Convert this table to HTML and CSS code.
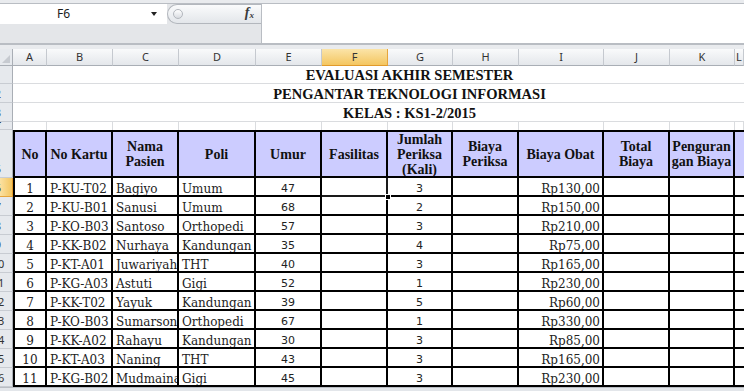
FILE: index.html
```html
<!DOCTYPE html>
<html>
<head>
<meta charset="utf-8">
<title>Evaluasi Akhir Semester</title>
<link rel="stylesheet" href="styles.css">
</head>
<body>
<div class="app">
  <div class="fbar">
    <div class="fbar-in">
      <div class="fleft">
        <div class="ftop">
          <div class="namebox"><span class="name">F6</span><span class="dd"></span></div>
          <div class="fxbox"><span class="knob"></span><span class="fx">f<sub>x</sub></span></div>
        </div>
      </div>
      <div class="finput"></div>
    </div>
  </div>

  <div class="sheet">
    <div class="corner"></div>
    <div class="ch">A</div><div class="ch">B</div><div class="ch">C</div><div class="ch">D</div><div class="ch">E</div><div class="ch sel">F</div><div class="ch">G</div><div class="ch">H</div><div class="ch">I</div><div class="ch">J</div><div class="ch">K</div><div class="ch">L</div>

    <div class="rh"><span>1</span></div><div class="t">EVALUASI AKHIR SEMESTER</div>
    <div class="rh"><span>2</span></div><div class="t">PENGANTAR TEKNOLOGI INFORMASI</div>
    <div class="rh"><span>3</span></div><div class="t">KELAS : KS1-2/2015</div>

    <div class="rh"><span>4</span></div>
    <div class="g"></div><div class="g"></div><div class="g"></div><div class="g"></div><div class="g"></div><div class="g"></div><div class="g"></div><div class="g"></div><div class="g"></div><div class="g"></div><div class="g"></div><div class="g"></div>

    <div class="rh"><span>5</span></div>
    <div class="hd ca">No</div>
    <div class="hd">No Kartu</div>
    <div class="hd">Nama Pasien</div>
    <div class="hd">Poli</div>
    <div class="hd">Umur</div>
    <div class="hd">Fasilitas</div>
    <div class="hd">Jumlah Periksa (Kali)</div>
    <div class="hd">Biaya Periksa</div>
    <div class="hd">Biaya Obat</div>
    <div class="hd">Total Biaya</div>
    <div class="hd">Penguran<wbr>gan Biaya</div>
    <div class="hd cl"></div>

    <div class="rh sel"><span>6</span></div>
    <div class="c ca ctr">1</div><div class="c">P-KU-T02</div><div class="c">Bagiyo</div><div class="c">Umum</div><div class="c num">47</div><div class="c active"><i class="handle"></i></div><div class="c num">3</div><div class="c"></div><div class="c rp">Rp130,00</div><div class="c"></div><div class="c"></div><div class="c cl"></div>

    <div class="rh"><span>7</span></div>
    <div class="c ca ctr">2</div><div class="c">P-KU-B01</div><div class="c">Sanusi</div><div class="c">Umum</div><div class="c num">68</div><div class="c"></div><div class="c num">2</div><div class="c"></div><div class="c rp">Rp150,00</div><div class="c"></div><div class="c"></div><div class="c cl"></div>

    <div class="rh"><span>8</span></div>
    <div class="c ca ctr">3</div><div class="c">P-KO-B03</div><div class="c">Santoso</div><div class="c">Orthopedi</div><div class="c num">57</div><div class="c"></div><div class="c num">3</div><div class="c"></div><div class="c rp">Rp210,00</div><div class="c"></div><div class="c"></div><div class="c cl"></div>

    <div class="rh"><span>9</span></div>
    <div class="c ca ctr">4</div><div class="c">P-KK-B02</div><div class="c">Nurhaya</div><div class="c">Kandungan</div><div class="c num">35</div><div class="c"></div><div class="c num">4</div><div class="c"></div><div class="c rp">Rp75,00</div><div class="c"></div><div class="c"></div><div class="c cl"></div>

    <div class="rh"><span>10</span></div>
    <div class="c ca ctr">5</div><div class="c">P-KT-A01</div><div class="c">Juwariyah</div><div class="c">THT</div><div class="c num">40</div><div class="c"></div><div class="c num">3</div><div class="c"></div><div class="c rp">Rp165,00</div><div class="c"></div><div class="c"></div><div class="c cl"></div>

    <div class="rh"><span>11</span></div>
    <div class="c ca ctr">6</div><div class="c">P-KG-A03</div><div class="c">Astuti</div><div class="c">Gigi</div><div class="c num">52</div><div class="c"></div><div class="c num">1</div><div class="c"></div><div class="c rp">Rp230,00</div><div class="c"></div><div class="c"></div><div class="c cl"></div>

    <div class="rh"><span>12</span></div>
    <div class="c ca ctr">7</div><div class="c">P-KK-T02</div><div class="c">Yayuk</div><div class="c">Kandungan</div><div class="c num">39</div><div class="c"></div><div class="c num">5</div><div class="c"></div><div class="c rp">Rp60,00</div><div class="c"></div><div class="c"></div><div class="c cl"></div>

    <div class="rh"><span>13</span></div>
    <div class="c ca ctr">8</div><div class="c">P-KO-B03</div><div class="c">Sumarsono</div><div class="c">Orthopedi</div><div class="c num">67</div><div class="c"></div><div class="c num">1</div><div class="c"></div><div class="c rp">Rp330,00</div><div class="c"></div><div class="c"></div><div class="c cl"></div>

    <div class="rh"><span>14</span></div>
    <div class="c ca ctr">9</div><div class="c">P-KK-A02</div><div class="c">Rahayu</div><div class="c">Kandungan</div><div class="c num">30</div><div class="c"></div><div class="c num">3</div><div class="c"></div><div class="c rp">Rp85,00</div><div class="c"></div><div class="c"></div><div class="c cl"></div>

    <div class="rh"><span>15</span></div>
    <div class="c ca ctr">10</div><div class="c">P-KT-A03</div><div class="c">Naning</div><div class="c">THT</div><div class="c num">43</div><div class="c"></div><div class="c num">3</div><div class="c"></div><div class="c rp">Rp165,00</div><div class="c"></div><div class="c"></div><div class="c cl"></div>

    <div class="rh"><span>16</span></div>
    <div class="c ca ctr">11</div><div class="c">P-KG-B02</div><div class="c">Mudmainah</div><div class="c">Gigi</div><div class="c num">45</div><div class="c"></div><div class="c num">3</div><div class="c"></div><div class="c rp">Rp230,00</div><div class="c"></div><div class="c"></div><div class="c cl"></div>

    <div class="foot"></div>
  </div>
</div>
</body>
</html>
```

FILE: styles.css
```css
* { box-sizing: border-box; margin: 0; padding: 0; }

body {
  margin: 0;
  width: 744px;
  height: 391px;
  overflow: hidden;
  background: #ffffff;
  font-family: "Liberation Serif", serif;
}

.app {
  width: 744px;
  height: 391px;
  overflow: hidden;
  display: flex;
  flex-direction: column;
}

/* ---------- formula bar ---------- */
.fbar {
  flex: none;
  height: 49px;
  background: #e9ebee;
  padding-top: 3px;
}

.fbar-in {
  height: 42px;
  display: flex;
  border-top: 1px solid #b9bdc3;
  border-bottom: 2px solid #b9bdc3;
}

.fleft {
  flex: none;
  width: 262px;
  background: #e4e6e9;
  border-right: 1px solid #b9bdc3;
}

.ftop {
  height: 20px;
  display: flex;
}

.namebox {
  flex: none;
  width: 167px;
  background: #ffffff;
  display: flex;
  align-items: center;
  padding-left: 57px;
}

.name {
  font-family: "Noto Sans", sans-serif;
  font-size: 12px;
  color: #1b1b1b;
  line-height: 16px;
}

.dd {
  margin-left: auto;
  margin-right: 10px;
  width: 0;
  height: 0;
  border-left: 3px solid transparent;
  border-right: 3px solid transparent;
  border-top: 4px solid #222;
}

.fxbox {
  flex: 1;
  display: flex;
  align-items: center;
  background: linear-gradient(#fafbfc, #e3e6ea);
  border: 1px solid #b3b7bd;
  border-right: none;
  border-radius: 10px 0 0 10px;
  padding-left: 5px;
}

.knob {
  width: 10px;
  height: 10px;
  border-radius: 50%;
  border: 1px solid #b3b7bd;
  background: linear-gradient(#ffffff, #d9dce1);
}

.fx {
  margin-left: auto;
  margin-right: 7px;
  font-family: "Liberation Serif", serif;
  font-style: italic;
  font-weight: bold;
  font-size: 14px;
  line-height: 14px;
  color: #3a3a3a;
}

.fx sub {
  font-size: 9px;
  vertical-align: -1px;
}

.finput {
  flex: 1;
  background: #ffffff;
}

/* ---------- sheet ---------- */
.sheet {
  flex: none;
  display: grid;
  grid-template-columns: 13px 34px 66px 66px 77px 66px 66px 65px 66px 85px 66px 65px 9px;
  grid-template-rows: 17px 18px 19px 19px 8px 48px repeat(11, 19px) 4px;
}

.corner {
  position: relative;
  background: #e6e9ed;
  border-right: 1px solid #a9aeb5;
  border-bottom: 1px solid #a9aeb5;
}

.corner::after {
  content: "";
  position: absolute;
  right: 2px;
  bottom: 2px;
  width: 0;
  height: 0;
  border-left: 8px solid transparent;
  border-bottom: 8px solid #c6cad0;
}

.ch {
  background: linear-gradient(#f9fafb, #e4e7eb);
  border-right: 1px solid #c5c9cf;
  border-bottom: 1px solid #a9aeb5;
  font-family: "Noto Sans", sans-serif;
  font-size: 11px;
  line-height: 16px;
  color: #333;
  text-align: center;
  overflow: hidden;
}

.ch.sel {
  background: linear-gradient(#fbe4a8, #f4c660);
  border-right-color: #e6a53c;
  border-bottom-color: #e19a2b;
}

.rh {
  background: #e6e9ed;
  border-right: 1px solid #a9aeb5;
  border-bottom: 1px solid #c8ccd2;
  display: flex;
  justify-content: flex-end;
  align-items: flex-end;
  overflow: hidden;
  font-family: "Noto Sans", sans-serif;
  font-size: 11px;
  color: #333;
}

.rh span {
  flex: none;
  width: 28px;
  text-align: center;
  line-height: 17px;
}

.rh.sel {
  background: linear-gradient(90deg, #fbe1a2, #f4c660);
  border-right-color: #e19a2b;
  border-bottom-color: #e6a53c;
}

/* title rows */
.t {
  grid-column: 2 / -1;
  background: #ffffff;
  border-bottom: 1px solid #dadcdf;
  display: flex;
  justify-content: center;
  align-items: flex-end;
  padding-left: 62px;
  font-family: "Liberation Serif", serif;
  font-weight: bold;
  font-size: 14.5px;
  line-height: 16px;
  color: #111;
  white-space: nowrap;
}

/* blank gridline row */
.g {
  background: #ffffff;
  border-right: 1px solid #dadcdf;
}

/* table header */
.hd {
  background: #ccccff;
  border-top: 2px solid #000;
  border-right: 2px solid #000;
  border-bottom: 2px solid #000;
  display: flex;
  align-items: center;
  justify-content: center;
  text-align: center;
  padding: 0 1px;
  font-family: "Liberation Serif", serif;
  font-weight: bold;
  font-size: 14px;
  line-height: 15px;
  color: #111;
  overflow: hidden;
}

/* data cells */
.c {
  position: relative;
  background: #ffffff;
  border-right: 2px solid #000;
  border-bottom: 2px solid #000;
  padding: 4px 2px 0 3px;
  font-family: "DejaVu Serif", serif;
  font-size: 12px;
  line-height: 14px;
  color: #222;
  white-space: nowrap;
  overflow: hidden;
}

.ca { border-left: 2px solid #000; }

.ctr { text-align: center; padding-left: 0; padding-right: 0; }

.num {
  text-align: center;
  padding-left: 0;
  padding-right: 0;
  font-family: "DejaVu Sans", sans-serif;
  font-size: 11px;
}

.rp { text-align: right; padding-right: 2px; }

.cl { border-right: none; }

.active {
  overflow: visible;
  box-shadow: inset 0 0 0 1px #ffffff;
  border-right-color: #1a1a1a;
  border-bottom-color: #1a1a1a;
}

.handle {
  position: absolute;
  right: -5px;
  bottom: -5px;
  width: 6px;
  height: 6px;
  background: #000;
  border: 1px solid #fff;
  z-index: 2;
}

.foot {
  grid-column: 1 / -1;
  background: #e3e6ea;
  border-top: 1px solid #b9bdc3;
}
```
